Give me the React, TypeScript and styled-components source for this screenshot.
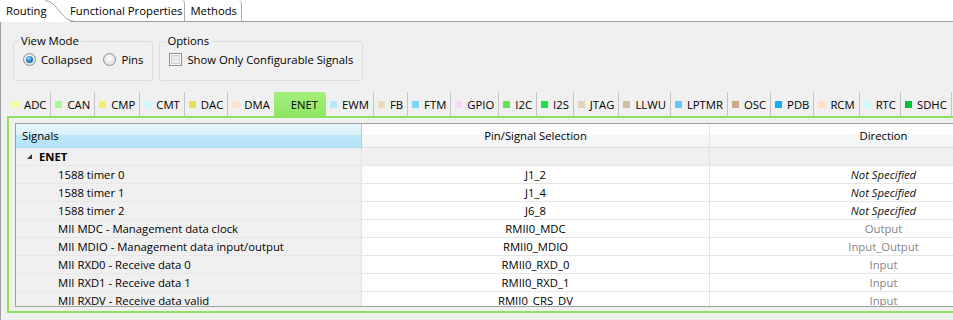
import React from 'react';
import styled, { createGlobalStyle } from 'styled-components';

const Global = createGlobalStyle`
  html, body { margin: 0; padding: 0; background: #f0f0f0; }
  body { font-family: "Open Sans", "Noto Sans", sans-serif; font-size: 11.3px; color: #000; }
  * { box-sizing: border-box; }
`;

const Page = styled.div`
  width: 953px;
  height: 320px;
  overflow: hidden;
  background: #f0f0f0;
  display: flex;
  flex-direction: column;
`;

const TabStrip = styled.div`
  display: flex;
  height: 22px;
  flex-shrink: 0;
  background: #fff;
`;

const MainTab = styled.div<{ $active?: boolean }>`
  height: 22px;
  display: flex;
  align-items: center;
  padding: 0 4px 1px 5px;
  white-space: nowrap;
  border-bottom: ${(p) => (p.$active ? 'none' : '1px solid #a0a0a0')};
  border-right: ${(p) => (p.$active ? 'none' : '1px solid #acacac')};
  border-top-right-radius: 4px;
`;

const RoutingTab = styled(MainTab)`
  width: 45px;
  padding-left: 6px;
`;

const FunctionalTab = styled(MainTab)`
  padding-left: 0;
  padding-right: 2px;
`;

const Curve = styled.svg`
  width: 30px;
  height: 22px;
  margin-right: -5px;
  flex-shrink: 0;
  position: relative;
  z-index: 1;
`;

const StripFill = styled.div`
  flex: 1;
  border-bottom: 1px solid #a0a0a0;
`;

const Content = styled.div`
  flex: 1;
  border-left: 1px solid #a0a0a0;
  padding-left: 12px;
  display: flex;
  flex-direction: column;
`;

const Groups = styled.div`
  display: flex;
  gap: 6px;
  margin-top: 12px;
`;

const Group = styled.fieldset`
  margin: 0;
  padding: 0 9px 0 5px;
  height: 47px;
  min-width: 0;
  border: 1px solid #d5dfe5;
  border-radius: 3px;
`;

const Legend = styled.legend`
  padding: 0 2px;
  line-height: 14px;
`;

const OptRow = styled.div`
  display: flex;
  align-items: center;
  gap: 11px;
  height: 14px;
  margin-top: 4px;
  padding-left: 4px;
`;

const Choice = styled.label`
  display: flex;
  align-items: center;
  gap: 5px;
  white-space: nowrap;
`;

const RadioCircle = styled.span<{ $checked?: boolean }>`
  width: 13px;
  height: 13px;
  border-radius: 50%;
  border: 1px solid #8e8f8f;
  background: radial-gradient(circle at 50% 40%, #ffffff 0%, #e6e6e6 60%, #d2d2d2 100%);
  display: flex;
  align-items: center;
  justify-content: center;
  flex-shrink: 0;
  &::after {
    content: '';
    display: ${(p) => (p.$checked ? 'block' : 'none')};
    width: 7px;
    height: 7px;
    border-radius: 50%;
    background: radial-gradient(circle at 40% 35%, #9fe0ff 0%, #2a86cf 45%, #0d4d8f 100%);
  }
`;

const CheckBox = styled.span`
  width: 13px;
  height: 13px;
  border: 1px solid #8e8f8f;
  box-shadow: inset 0 0 0 1px #fff, inset 0 0 0 2px #d0d0d0;
  background: linear-gradient(135deg, #dcdcdc, #fafafa);
  flex-shrink: 0;
`;

const Periph = styled.div`
  margin-left: -6px;
  margin-top: 11px;
  display: flex;
  flex-direction: column;
`;

const PTabs = styled.div`
  display: flex;
  height: 24px;
  padding-left: 1px;
`;

const PTab = styled.div<{ $active?: boolean }>`
  display: flex;
  align-items: center;
  gap: 5px;
  height: 24px;
  padding: ${(p) => (p.$active ? '0 8px 0 5px' : '0 4px')};
  white-space: nowrap;
  border-right: ${(p) => (p.$active ? 'none' : '1px solid #c3c3c3')};
  background: ${(p) => (p.$active ? 'linear-gradient(#a4f07c, #8fe564)' : 'transparent')};
  border-top-left-radius: ${(p) => (p.$active ? '3px' : '0')};
  border-top-right-radius: ${(p) => (p.$active ? '3px' : '0')};
  margin-left: ${(p) => (p.$active ? '-1px' : '0')};
`;

const Swatch = styled.span<{ $c: string }>`
  width: 7px;
  height: 7px;
  background: ${(p) => p.$c};
  flex-shrink: 0;
`;

const Frame = styled.div`
  width: 1100px;
  height: 197px;
  border: 2px solid #8ee35e;
  padding: 5px 0 4px 6px;
`;

const Table = styled.div`
  height: 184px;
  border: 1px solid #a0a0a0;
  border-right: none;
  background: #fff;
  overflow: hidden;
`;

const cols = '346px 348px 348px';

const HeadRow = styled.div`
  display: grid;
  grid-template-columns: ${cols};
  height: 24px;
`;

const HeadCell = styled.div<{ $sel?: boolean; $center?: boolean }>`
  display: flex;
  align-items: center;
  justify-content: ${(p) => (p.$center ? 'center' : 'flex-start')};
  padding-left: ${(p) => (p.$center ? '0' : '6px')};
  padding-bottom: 1px;
  border-bottom: 1px solid ${(p) => (p.$sel ? '#a9d9f2' : '#e0e0e0')};
  border-right: 1px solid ${(p) => (p.$sel ? '#96d3f3' : '#e3e3e3')};
  background: ${(p) =>
    p.$sel
      ? 'linear-gradient(#e5f6fd 0%, #dcf2fc 45%, #bee7f9 50%, #b4e3f8 100%)'
      : 'linear-gradient(#ffffff 0%, #ffffff 45%, #f6f7f8 50%, #f2f3f4 100%)'};
`;

const Row = styled.div<{ $group?: boolean }>`
  display: grid;
  grid-template-columns: ${cols};
  height: 18px;
  background: ${(p) => (p.$group ? '#f0f0f0' : '#fff')};
`;

const Cell = styled.div<{ $first?: boolean; $indent?: number; $center?: boolean }>`
  display: flex;
  align-items: center;
  justify-content: ${(p) => (p.$center ? 'center' : 'flex-start')};
  padding-left: ${(p) => p.$indent ?? 0}px;
  white-space: nowrap;
  background: ${(p) => (p.$first ? '#f0f0f0' : 'transparent')};
  border-bottom: 1px solid #e6e6e6;
  border-right: 1px solid #e2e2e2;
`;

const GroupName = styled.span`
  font-weight: bold;
  margin-left: 7px;
`;

const DirText = styled.span<{ $unset?: boolean }>`
  font-style: ${(p) => (p.$unset ? 'italic' : 'normal')};
  color: ${(p) => (p.$unset ? '#111' : '#858585')};
`;

const periphs: { name: string; color: string }[] = [
  { name: 'ADC', color: '#f9f9a0' },
  { name: 'CAN', color: '#a8f898' },
  { name: 'CMP', color: '#f0ef70' },
  { name: 'CMT', color: '#ccf8f8' },
  { name: 'DAC', color: '#e2e05c' },
  { name: 'DMA', color: '#fde1c9' },
  { name: 'ENET', color: '#97e96d' },
  { name: 'EWM', color: '#b4e8fa' },
  { name: 'FB', color: '#efd8c2' },
  { name: 'FTM', color: '#80d6f8' },
  { name: 'GPIO', color: '#f8d8fa' },
  { name: 'I2C', color: '#5ce35c' },
  { name: 'I2S', color: '#1fe052' },
  { name: 'JTAG', color: '#e2d2c2' },
  { name: 'LLWU', color: '#d2bca6' },
  { name: 'LPTMR', color: '#5ec8fa' },
  { name: 'OSC', color: '#c9aa8a' },
  { name: 'PDB', color: '#10aefa' },
  { name: 'RCM', color: '#fde0c8' },
  { name: 'RTC', color: '#d0fafa' },
  { name: 'SDHC', color: '#00c23c' },
];

const rows: [string, string, string][] = [
  ['1588 timer 0', 'J1_2', 'Not Specified'],
  ['1588 timer 1', 'J1_4', 'Not Specified'],
  ['1588 timer 2', 'J6_8', 'Not Specified'],
  ['MII MDC - Management data clock', 'RMII0_MDC', 'Output'],
  ['MII MDIO - Management data input/output', 'RMII0_MDIO', 'Input_Output'],
  ['MII RXD0 - Receive data 0', 'RMII0_RXD_0', 'Input'],
  ['MII RXD1 - Receive data 1', 'RMII0_RXD_1', 'Input'],
  ['MII RXDV - Receive data valid', 'RMII0_CRS_DV', 'Input'],
];

export default function App() {
  return (
    <Page>
      <Global />
      <TabStrip>
        <RoutingTab $active>Routing</RoutingTab>
        <Curve viewBox="0 0 30 22">
          <path d="M0 0.5 C 12 0.5, 16 21.5, 30 21.5" fill="none" stroke="#a0a0a0" strokeWidth="1" />
        </Curve>
        <FunctionalTab>Functional Properties</FunctionalTab>
        <MainTab>Methods</MainTab>
        <StripFill />
      </TabStrip>
      <Content>
        <Groups>
          <Group>
            <Legend>View Mode</Legend>
            <OptRow>
              <Choice>
                <RadioCircle $checked />
                Collapsed
              </Choice>
              <Choice>
                <RadioCircle />
                Pins
              </Choice>
            </OptRow>
          </Group>
          <Group>
            <Legend>Options</Legend>
            <OptRow>
              <Choice>
                <CheckBox />
                Show Only Configurable Signals
              </Choice>
            </OptRow>
          </Group>
        </Groups>
        <Periph>
          <PTabs>
            {periphs.map((p) => (
              <PTab key={p.name} $active={p.name === 'ENET'}>
                <Swatch $c={p.color} />
                {p.name}
              </PTab>
            ))}
          </PTabs>
          <Frame>
            <Table>
              <HeadRow>
                <HeadCell $sel>Signals</HeadCell>
                <HeadCell $center>Pin/Signal Selection</HeadCell>
                <HeadCell $center>Direction</HeadCell>
              </HeadRow>
              <Row $group>
                <Cell $first $indent={11}>
                  <svg width="5" height="5" viewBox="0 0 5 5">
                    <polygon points="5,0 5,5 0,5" fill="#333" />
                  </svg>
                  <GroupName>ENET</GroupName>
                </Cell>
                <Cell />
                <Cell />
              </Row>
              {rows.map(([sig, pin, dir]) => (
                <Row key={sig}>
                  <Cell $first $indent={42}>{sig}</Cell>
                  <Cell $center>{pin}</Cell>
                  <Cell $center>
                    <DirText $unset={dir === 'Not Specified'}>{dir}</DirText>
                  </Cell>
                </Row>
              ))}
            </Table>
          </Frame>
        </Periph>
      </Content>
    </Page>
  );
}
